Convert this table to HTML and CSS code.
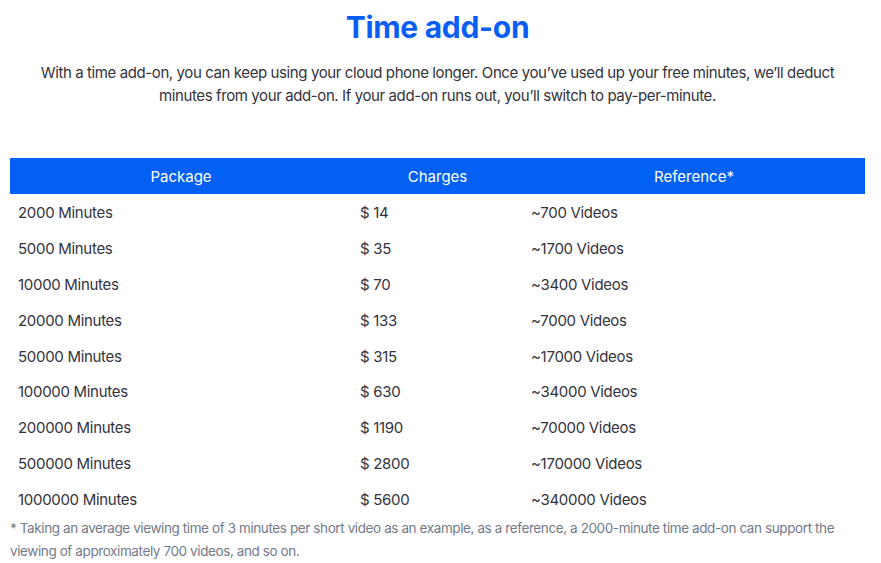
FILE: index.html
```html
<!DOCTYPE html>
<html lang="en">
<head>
<meta charset="utf-8">
<title>Time add-on</title>
<link rel="stylesheet" href="styles.css">
</head>
<body>
<main class="page">
  <h1 class="title">Time add-on</h1>
  <p class="intro">With a time add-on, you can keep using your cloud phone longer. Once you’ve used up your free minutes, we’ll deduct minutes from your add-on. If your add-on runs out, you’ll switch to pay-per-minute.</p>
  <table class="plans">
    <thead>
      <tr><th>Package</th><th>Charges</th><th>Reference*</th></tr>
    </thead>
    <tbody>
      <tr><td>2000 Minutes</td><td>$ 14</td><td>~700 Videos</td></tr>
      <tr><td>5000 Minutes</td><td>$ 35</td><td>~1700 Videos</td></tr>
      <tr><td>10000 Minutes</td><td>$ 70</td><td>~3400 Videos</td></tr>
      <tr><td>20000 Minutes</td><td>$ 133</td><td>~7000 Videos</td></tr>
      <tr><td>50000 Minutes</td><td>$ 315</td><td>~17000 Videos</td></tr>
      <tr><td>100000 Minutes</td><td>$ 630</td><td>~34000 Videos</td></tr>
      <tr><td>200000 Minutes</td><td>$ 1190</td><td>~70000 Videos</td></tr>
      <tr><td>500000 Minutes</td><td>$ 2800</td><td>~170000 Videos</td></tr>
      <tr><td>1000000 Minutes</td><td>$ 5600</td><td>~340000 Videos</td></tr>
    </tbody>
  </table>
  <p class="note">* Taking an average viewing time of 3 minutes per short video as an example, as a reference, a 2000-minute time add-on can support the viewing of approximately 700 videos, and so on.</p>
</main>
</body>
</html>
```
FILE: styles.css
```css
* { box-sizing: border-box; }
html, body { margin: 0; padding: 0; background: #fff; }
body {
  font-family: "Inter", "Liberation Sans", sans-serif;
  color: #2b2b33;
}
.page {
  width: 881px;
  padding: 0 16px 0 10px;
}
.title {
  margin: 0;
  padding-top: 9px;
  text-align: center;
  font-size: 30px;
  line-height: 36px;
  font-weight: 700;
  color: #0a5ef5;
  letter-spacing: -0.3px;
}
.intro {
  margin: 16px 20px 0 20px;
  text-align: center;
  font-size: 15px;
  line-height: 23px;
  color: #33333d;
  letter-spacing: -0.4px;
}
.plans {
  margin-top: 51px;
  width: 855px;
  border-collapse: collapse;
  table-layout: fixed;
  font-size: 15px;
}
.plans th {
  background: #0360f5;
  color: #fff;
  font-weight: 400;
  height: 36px;
  padding: 0 8px;
  text-align: center;
}
.plans th:nth-child(1), .plans th:nth-child(3) { width: 342px; }
.plans th:nth-child(2) { width: 171px; }
.plans td {
  height: 35.8px;
  padding: 2px 8px 0 8px;
  color: #33333d;
  letter-spacing: -0.3px;
}
.note {
  margin: 1px 0 0 0;
  font-size: 13.5px;
  line-height: 23px;
  color: #727a8a;
  letter-spacing: -0.4px;
}
```
